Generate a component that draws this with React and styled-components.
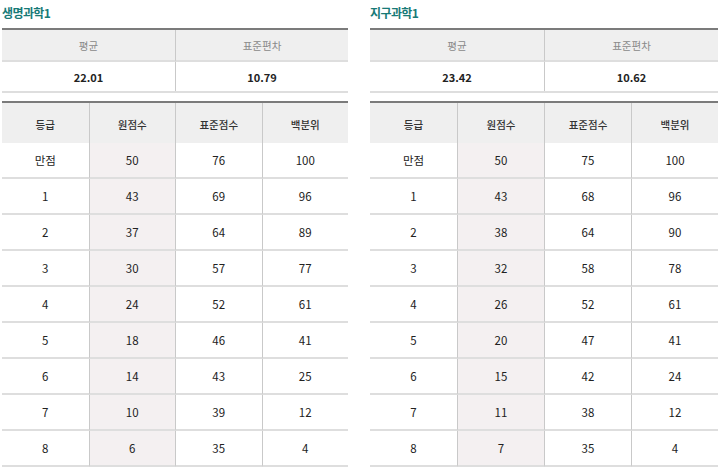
import React from "react";
import styled, { createGlobalStyle } from "styled-components";

const Global = createGlobalStyle`
  html, body { margin: 0; padding: 0; background: #fff; }
  body { font-family: "Noto Sans CJK KR", "Noto Sans", sans-serif; }
`;

const Page = styled.div`
  display: grid;
  grid-template-columns: 346px 348px;
  column-gap: 22px;
  padding-left: 2px;
  width: 720px;
  height: 472px;
  overflow: hidden;
  box-sizing: border-box;
`;

const Panel = styled.section`
  display: flex;
  flex-direction: column;
`;

const Title = styled.h2`
  margin: 0;
  height: 28px;
  display: flex;
  align-items: center;
  padding-bottom: 4px;
  box-sizing: border-box;
  font-size: 12px;
  font-weight: 700;
  letter-spacing: -0.6px;
  color: #177a77;
`;

const Summary = styled.div`
  display: grid;
  grid-template-columns: 1fr 1fr;
  border-top: 2px solid #7b7b7b;
  border-bottom: 2px solid #dedede;
`;

const SumHead = styled.div`
  height: 30px;
  display: flex;
  align-items: center;
  justify-content: center;
  background: #efefef;
  border-bottom: 2px solid #dedede;
  border-left: ${(p) => (p.$first ? "none" : "1px solid #c9c9c9")};
  font-size: 10.5px;
  color: #8a8a8a;
`;

const SumValue = styled.div`
  height: 29px;
  display: flex;
  align-items: center;
  justify-content: center;
  border-left: ${(p) => (p.$first ? "none" : "1px solid #c9c9c9")};
  font-size: 11px;
  font-weight: 700;
  color: #222;
`;

const Grades = styled.div`
  margin-top: 8px;
  display: grid;
  grid-template-columns: repeat(4, 1fr);
  border-top: 2px solid #7b7b7b;
`;

const GradeHead = styled.div`
  height: 40px;
  padding-top: 3px;
  box-sizing: border-box;
  display: flex;
  align-items: center;
  justify-content: center;
  background: #efefef;
  border-left: ${(p) => (p.$first ? "none" : "1px solid #c9c9c9")};
  font-size: 10.5px;
  font-weight: 500;
  color: #333;
`;

const Cell = styled.div`
  height: 36px;
  box-sizing: border-box;
  display: flex;
  align-items: center;
  justify-content: center;
  border-bottom: 2px solid #dedede;
  border-left: ${(p) => (p.$first ? "none" : "1px solid #c9c9c9")};
  background: ${(p) => (p.$shade ? "#f4f0f1" : "#fff")};
  font-size: 11.5px;
  color: #222;
`;

const data = [
  {
    title: "생명과학1",
    mean: "22.01",
    sd: "10.79",
    rows: [
      ["만점", 50, 76, 100],
      [1, 43, 69, 96],
      [2, 37, 64, 89],
      [3, 30, 57, 77],
      [4, 24, 52, 61],
      [5, 18, 46, 41],
      [6, 14, 43, 25],
      [7, 10, 39, 12],
      [8, 6, 35, 4],
    ],
  },
  {
    title: "지구과학1",
    mean: "23.42",
    sd: "10.62",
    rows: [
      ["만점", 50, 75, 100],
      [1, 43, 68, 96],
      [2, 38, 64, 90],
      [3, 32, 58, 78],
      [4, 26, 52, 61],
      [5, 20, 47, 41],
      [6, 15, 42, 24],
      [7, 11, 38, 12],
      [8, 7, 35, 4],
    ],
  },
];

const heads = ["등급", "원점수", "표준점수", "백분위"];

function SubjectPanel({ d }) {
  return (
    <Panel>
      <Title>{d.title}</Title>
      <Summary>
        <SumHead $first>평균</SumHead>
        <SumHead>표준편차</SumHead>
        <SumValue $first>{d.mean}</SumValue>
        <SumValue>{d.sd}</SumValue>
      </Summary>
      <Grades>
        {heads.map((h, i) => (
          <GradeHead key={h} $first={i === 0}>
            {h}
          </GradeHead>
        ))}
        {d.rows.map((r, ri) =>
          r.map((v, ci) => (
            <Cell key={ri + "-" + ci} $first={ci === 0} $shade={ci === 1}>
              {v}
            </Cell>
          ))
        )}
      </Grades>
    </Panel>
  );
}

export default function App() {
  return (
    <>
      <Global />
      <Page>
        {data.map((d) => (
          <SubjectPanel key={d.title} d={d} />
        ))}
      </Page>
    </>
  );
}
